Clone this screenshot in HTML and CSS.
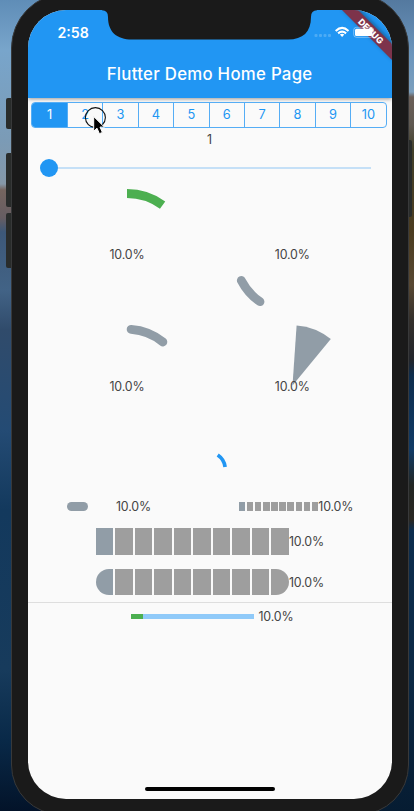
FILE: index.html
```html
<!DOCTYPE html>
<html lang="en">
<head>
<meta charset="utf-8">
<title>Flutter Demo Home Page</title>
<link rel="stylesheet" href="styles.css">
</head>
<body>
<div class="desktop">
  <i class="button mute"></i><i class="button volume-up"></i><i class="button volume-down"></i><i class="button power"></i>
  <div class="phone">
    <main class="screen">
      <header class="app-bar">
        <div class="status"><span>2:58</span></div>
        <h1>Flutter Demo Home Page</h1>
      </header>
      <nav class="tabs">
        <span class="active">1</span><span>2</span><span>3</span><span>4</span><span>5</span><span>6</span><span>7</span><span>8</span><span>9</span><span>10</span>
      </nav>
      <div class="value">1</div>
      <div class="slider"><i class="thumb"></i><i class="track"></i></div>
      <section class="gauges">
        <div class="gauge">
          <svg viewBox="-66 -66 132 132"><path d="M0-60.5A60.5 60.5 0 0 1 35.6-48.9" stroke="#4caf50" stroke-width="9" fill="none"/></svg>
          <span>10.0%</span>
        </div>
        <div class="gauge">
          <svg viewBox="-66 -66 132 132"><path d="M-50.7 26.5A57.2 57.2 0 0 0-32 47.7" stroke="#919da7" stroke-width="8.8" stroke-linecap="round" fill="none"/></svg>
          <span>10.0%</span>
        </div>
        <div class="gauge">
          <svg viewBox="-66 -66 132 132"><path d="M4.1-56.6A57 57 0 0 1 35.9-44" stroke="#919da7" stroke-width="8.8" stroke-linecap="round" fill="none"/></svg>
          <span>10.0%</span>
        </div>
        <div class="gauge">
          <svg viewBox="-66 -66 132 132"><path d="M.5-.5L4.6-60.6A61 61 0 0 1 38.8-47Z" fill="#919da7"/></svg>
          <span>10.0%</span>
        </div>
      </section>
      <div class="spinner">
        <svg width="34" height="34" viewBox="192 450 34 34"><path d="M217.7 455A17 17 0 0 1 225.1 467" stroke="#2196f3" stroke-width="3.7" fill="none"/></svg>
      </div>
      <section class="small-bars">
        <i class="pill"></i><span class="pill-label">10.0%</span>
        <div class="steps small"><i class="on"></i><i></i><i></i><i></i><i></i><i></i><i></i><i></i><i></i><i></i></div><span>10.0%</span>
      </section>
      <section class="bar-row">
        <div class="steps large"><i class="on"></i><i></i><i></i><i></i><i></i><i></i><i></i><i></i><i></i><i></i></div><span>10.0%</span>
      </section>
      <section class="bar-row rounded">
        <div class="steps large"><i class="on"></i><i></i><i></i><i></i><i></i><i></i><i></i><i></i><i></i><i></i></div><span>10.0%</span>
      </section>
      <section class="linear"><div class="linear-track"><i></i></div><span>10.0%</span></section>
      <div class="home"></div>
      <svg class="overlay" width="364" height="90" viewBox="28 10 364 90">
        <defs><filter id="shade" x="-20%" y="-20%" width="140%" height="140%"><feGaussianBlur stdDeviation="2.2"/></filter></defs>
        <path d="M342 8L394 60V44L360 10Z" fill="#123" opacity=".5" filter="url(#shade)"/>
        <path d="M340 8L394 62V46L356 8Z" fill="#7d334b"/>
        <path d="M102 9V10.3Q108 10.3 108 17C108 32 117 39.5 132 39.5H288C303 39.5 311 32 311 17Q311 10.3 317 10.3V9Z" fill="#1a1a1a"/>
        <g fill="#4dabf5"><rect x="314.5" y="34" width="3" height="3" rx="1"/><rect x="319" y="34" width="3" height="3" rx="1"/><rect x="323.5" y="34" width="3" height="3" rx="1"/><rect x="328" y="34" width="3" height="3" rx="1"/></g>
        <g fill="none" stroke="#fff" stroke-width="2.1"><path d="M335.7 30.9Q342.1 25 348.5 30.9"/><path d="M338.1 33.4Q342.1 29.9 346.1 33.4"/></g>
        <path d="M339.9 34.5Q342.1 32.8 344.3 34.5L342.1 37Z" fill="#fff"/>
        <rect x="353.7" y="27.3" width="20" height="10" rx="2.8" fill="none" stroke="#fff" stroke-opacity=".5" stroke-width=".8"/>
        <rect x="355" y="28.7" width="17.5" height="7.3" rx="1.5" fill="#fff"/>
        <text class="debug" transform="translate(370.7 31.5) rotate(45)" text-anchor="middle" y="3">DEBUG</text>
      </svg>
    </main>
  </div>
  <svg class="pointer" width="24" height="30" viewBox="0 0 24 30">
    <circle cx="11.4" cy="11.6" r="10" fill="none" stroke="#111" stroke-width="1.1"/>
    <path d="M9.7 10.5V25.3L13 22.2L15.4 27.7L18.4 26.4L16 21.1H20.4Z" fill="#000" stroke="#fff" stroke-width="1"/>
  </svg>
</div>
</body>
</html>
```
FILE: styles.css
```css
* { box-sizing: border-box; }
body { margin: 0; width: 414px; height: 811px; overflow: hidden; }
.desktop {
  position: relative;
  width: 414px;
  height: 811px;
  overflow: hidden;
  padding-left: 11px;
  background:
    linear-gradient(#54799f 0, #6c96bd 55px, #7c9fbd 92px, #6b5f59 97px, #5f5951 125px, #42402a 150px, #4b3c20 230px, #584833 285px, #34302c 320px, #22252b 360px, #0e2d4d 375px, #113b66 450px, #222624 485px, #292722 520px, #0c2d4e 530px, #0c2944 680px, #061c32 811px) right / 207px 100% no-repeat,
    linear-gradient(#5f8db7 0, #78a5cb 50px, #7b9bb6 140px, #8598a8 184px, #75655f 190px, #665d62 218px, #3d5878 232px, #426386 290px, #304b6b 330px, #244b74 430px, #13395d 510px, #173b5c 670px, #092948 740px, #031329 811px);
}
.button { position: absolute; background: #292c2b; border-radius: 2px; left: 5.5px; width: 8px; }
.mute { top: 98px; height: 31px; }
.volume-up { top: 153px; height: 54px; }
.volume-down { top: 213px; height: 55px; }
.power { left: 405px; width: 6.5px; top: 140px; height: 77px; }
.phone {
  position: relative;
  width: 397.5px;
  height: 822px;
  margin-top: -7px;
  padding: 16px 15.5px 15.5px 15.6px;
  border: 1px solid #38393a;
  border-radius: 55px 55px 50px 50px;
  background: #1a1a1a;
}
.screen {
  position: relative;
  display: flex;
  flex-direction: column;
  width: 364px;
  height: 788.5px;
  overflow: hidden;
  border-radius: 38px;
  background: #fafafa;
  color: #444;
  font: 12.4px/16px Inter, sans-serif;
}
.app-bar {
  flex: none;
  height: 88.3px;
  background: #2196f3;
  color: #fff;
  box-shadow: 0 1px 4px rgba(0,0,0,.4);
}
.status { height: 44px; padding: 14px 0 0 29.8px; font-size: 14.2px; font-weight: 600; line-height: 17px; }
h1 { margin: 9px 0 0; text-align: center; font-size: 16.8px; font-weight: 550; letter-spacing: .28px; line-height: 22px; }
.tabs {
  flex: none;
  display: grid;
  grid-template-columns: repeat(10, 1fr);
  height: 26px;
  margin: 3.7px 4.4px 0 3.5px;
  border: 1px solid #55adf5;
  border-radius: 4px;
  overflow: hidden;
  color: #2196f3;
  font-size: 12.8px;
  line-height: 24px;
  text-align: center;
}
.tabs span { margin-left: -.6px; padding-right: .6px; }
.tabs span + span { border-left: 1px solid #55adf5; }
.tabs .active { background: #2196f3; color: #fff; margin-left: 0; }
.value { flex: none; height: 22px; line-height: 24px; text-align: center; }
.slider { flex: none; display: flex; align-items: center; height: 36px; padding-left: 11.9px; }
.thumb { width: 18px; height: 18px; border-radius: 50%; background: #2196f3; }
.track { width: 313.5px; height: 2px; background: #c5e0f7; }
.slider { padding-left: 12.4px; }
.track { width: 313px; }
.gauges {
  flex: none;
  display: grid;
  grid-template: 132px 132px / 132px 132px;
  column-gap: 33.3px;
  margin: 2.3px 0 0 33.4px;
}
.gauge { display: grid; place-items: center; }
.gauge > * { grid-area: 1 / 1; }
.gauge svg { width: 132px; height: 132px; }
.gauge span, .small-bars span, .rounded span, .linear span { padding-top: 2px; }
.gauge span, .small-bars span, .bar-row span, .linear span { letter-spacing: -.15px; }
.spinner { flex: none; height: 44px; padding-left: 164.4px; margin-top: -2.3px; }
.spinner svg { display: block; overflow: visible; }
.small-bars { flex: none; display: flex; align-items: center; height: 20px; padding-left: 39.4px; margin-top: 2.5px; }
.pill { width: 21px; height: 9px; border-radius: 5px; background: #919da7; }
.pill-label { width: 122.7px; margin-left: 28px; }
.steps { display: grid; grid-template-columns: repeat(10, 1fr); }
.steps i { background: #9e9e9e; }
.steps .on { background: #919da7; }
.small { width: 79.6px; height: 9px; gap: 1.6px; }
.large { width: 193.4px; height: 26.5px; gap: 1.6px; }
.bar-row { flex: none; display: flex; align-items: center; height: 26.5px; margin: 12px 0 0 68px; }
.bar-row.rounded { margin-top: 14px; }
.rounded .steps { border-radius: 14px; overflow: hidden; }
.linear { flex: none; display: flex; align-items: center; height: 28px; margin-top: 6.5px; border-top: 1px solid #dedede; padding-left: 103.2px; }
.linear-track { width: 123.2px; height: 5.5px; margin-right: 4.5px; background: #90caf9; }
.linear-track i { display: block; width: 10%; height: 100%; background: #4caf50; }
.home { width: 130px; height: 4.5px; margin: auto auto 7.3px 117.2px; border-radius: 3px; background: #000; }
.overlay { position: absolute; left: 0; top: 0; }
.debug { font: 800 8.8px Inter, sans-serif; fill: #fff; letter-spacing: .2px; }
.pointer { position: absolute; left: 84px; top: 106px; }
```
